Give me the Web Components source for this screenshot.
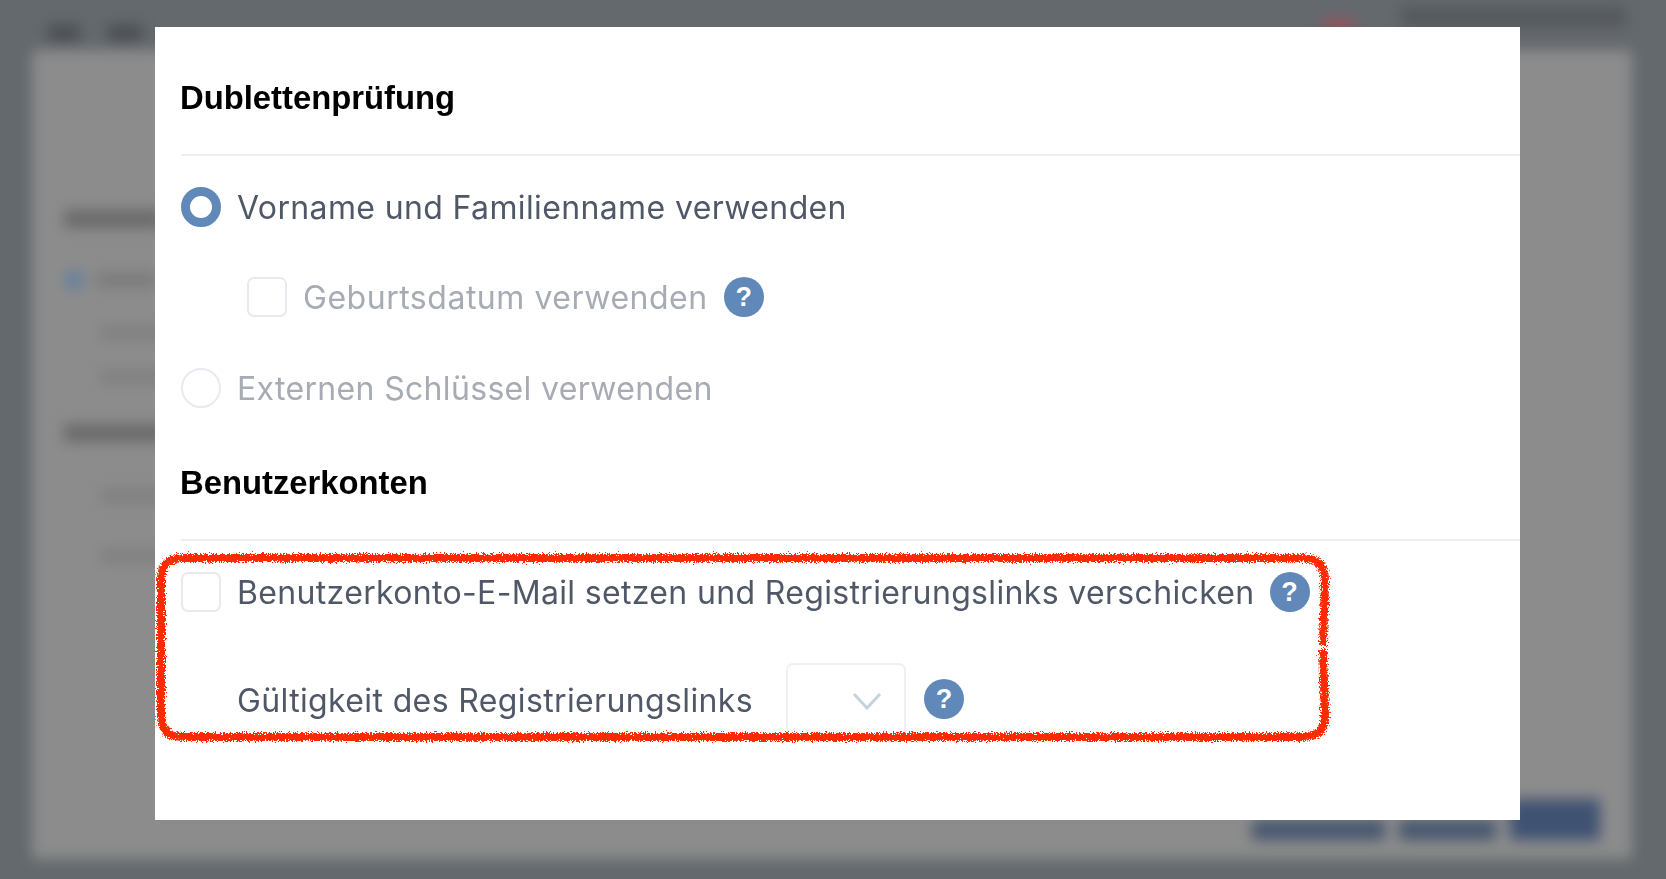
<!DOCTYPE html>
<html lang="de">
<head>
<meta charset="utf-8">
<title>Dublettenprüfung</title>
<style>
  html, body { margin: 0; padding: 0; height: 100%; overflow: hidden; background: #64696e; }
</style>
</head>
<body>
<page-shade></page-shade>
<dedupe-dialog>
  <section-title>Dublettenprüfung</section-title>
  <form-row kind="radio-on" style="margin-top:31px">Vorname und Familienname verwenden</form-row>
  <form-row kind="check" muted indent style="margin-top:50px;letter-spacing:.52px">Geburtsdatum verwenden<help-badge slot="after"></help-badge></form-row>
  <form-row kind="radio" muted style="margin-top:51px;letter-spacing:.33px">Externen Schlüssel verwenden</form-row>
  <section-title style="margin-top:55px">Benutzerkonten</section-title>
  <form-row kind="check" style="margin-top:31px;letter-spacing:.34px">Benutzerkonto-E-Mail setzen und Registrierungslinks verschicken<help-badge slot="after" style="margin-left:15px"></help-badge></form-row>
  <select-row style="margin-top:51px">Gültigkeit des Registrierungslinks</select-row>
  <red-scribble></red-scribble>
</dedupe-dialog>

<script>
class PageShade extends HTMLElement {
  constructor() {
    super();
    this.shadowDOM = this.attachShadow({ mode: 'open' });
    this.shadowDOM.innerHTML = `
      <style>
        :host { display: block; width: 1666px; height: 879px; overflow: hidden; background: #64696e; }
        .blur { height: 100%; filter: blur(7px); display: flex; flex-direction: column; }
        .top { height: 50px; flex: none; display: flex; align-items: center; gap: 28px; padding: 0 40px 0 48px; }
        .top i { display: block; height: 16px; background: #4a4e52; }
        .top .a { width: 32px; margin-top: 16px; }
        .top .b { width: 34px; margin-top: 16px; }
        .top .red { width: 30px; height: 14px; background: #96525a; margin: 2px 5px 0 auto; }
        .top .c { width: 225px; height: 20px; margin: 0 0 16px 14px; background: #55595d; }
        .panel { flex: 1; margin: 0 34px 20px 32px; background: #8c8c8c; padding: 160px 0 19px 32px; display: flex; flex-direction: column; }
        .panel i { display: block; background: #7a7a7a; height: 14px; flex: none; }
        .h { width: 100px; background: #6a6a6a !important; height: 18px !important; }
        .dot { width: 20px !important; height: 20px !important; border-radius: 50%; background: #66809f !important; }
        .line { display: flex; align-items: center; gap: 12px; margin-top: 42px; }
        .sub { margin: 36px 0 0 36px; width: 90px; background: #808080 !important; }
        .foot { margin-top: auto; display: flex; justify-content: flex-end; gap: 14px; padding-right: 32px; align-items: flex-end; }
        .foot i { background: #47566e; height: 20px; }
        .foot .x { width: 133px; }
        .foot .y { width: 97px; }
        .foot .z { width: 90px; height: 41px; background: #3f5272; }
      </style>
      <div class="blur">
        <div class="top"><i class="a"></i><i class="b"></i><i class="red"></i><i class="c"></i></div>
        <div class="panel">
          <i class="h"></i>
          <div class="line"><i class="dot"></i><i style="width:60px"></i></div>
          <i class="sub"></i>
          <i class="sub" style="margin-top:30px"></i>
          <i class="h" style="margin-top:40px"></i>
          <i class="sub" style="margin-top:47px"></i>
          <i class="sub" style="margin-top:46px"></i>
          <div class="foot"><i class="x"></i><i class="y"></i><i class="z"></i></div>
        </div>
      </div>
    `;
  }
}

class DedupeDialog extends HTMLElement {
  constructor() {
    super();
    this.shadowDOM = this.attachShadow({ mode: 'open' });
    this.shadowDOM.innerHTML = `
      <style>
        :host {
          display: block;
          position: absolute;
          left: 155px;
          top: 27px;
          width: 1365px;
          height: 793px;
          box-sizing: border-box;
          padding: 51px 0 0 26px;
          background: #fff;
        }
      </style>
      <slot></slot>
    `;
  }
}

class SectionTitle extends HTMLElement {
  constructor() {
    super();
    this.shadowDOM = this.attachShadow({ mode: 'open' });
    this.shadowDOM.innerHTML = `
      <style>
        :host {
          display: block;
          font: 700 32.8px/40px "Liberation Sans", Arial, sans-serif;
          color: #000;
          padding-bottom: 36px;
          border-bottom: 2px solid #eceef0;
        }
        span { display: block; filter: blur(.7px); margin-left: -1px; }
      </style>
      <span><slot></slot></span>
    `;
  }
}

class FormRow extends HTMLElement {
  constructor() {
    super();
    this.shadowDOM = this.attachShadow({ mode: 'open' });
    const kind = this.getAttribute('kind');
    this.shadowDOM.innerHTML = `
      <style>
        :host {
          display: flex;
          align-items: center;
          height: 40px;
          font: 400 32px/40px Inter, "Liberation Sans", sans-serif;
          letter-spacing: .37px;
          color: #505868;
        }
        :host([muted]) { color: #a6abb4; }
        :host([indent]) { margin-left: 66px; }
        .box { width: 40px; height: 40px; box-sizing: border-box; flex: none; margin-right: 16px; border: 2px solid #e8eaee; background: #fff; }
        .check { border-radius: 7px; }
        .radio, .radio-on { border-radius: 50%; }
        .radio-on { border: 9.5px solid #6088b8; }
        .label { white-space: nowrap; filter: blur(.7px); padding-top: 2px; }
        ::slotted([slot=after]) { margin-left: 16px; }
      </style>
      <span class="box ${kind}"></span>
      <span class="label"><slot></slot></span>
      <slot name="after"></slot>
    `;
  }
}

class SelectRow extends HTMLElement {
  constructor() {
    super();
    this.shadowDOM = this.attachShadow({ mode: 'open' });
    this.shadowDOM.innerHTML = `
      <style>
        :host {
          display: flex;
          align-items: center;
          height: 75px;
          margin-left: 56px;
          font: 400 32px/40px Inter, "Liberation Sans", sans-serif;
          letter-spacing: .37px;
          color: #505868;
        }
        .label { white-space: nowrap; width: 549px; flex: none; filter: blur(.7px); }
        .select {
          width: 120px;
          height: 75px;
          box-sizing: border-box;
          flex: none;
          border: 2px solid #eff0f3;
          border-radius: 7px;
          display: flex;
          align-items: center;
          justify-content: flex-end;
          padding: 0 21px 0 0;
        }
        svg { display: block; }
        help-badge { margin: 0 0 4px 18px; }
      </style>
      <span class="label"><slot></slot></span>
      <span class="select">
        <svg width="32" height="18" viewBox="0 0 32 18"><path d="M3 2 L16 16 L29 2" fill="none" stroke="#c8d2dc" stroke-width="3"/></svg>
      </span>
      <help-badge></help-badge>
    `;
  }
}

class HelpBadge extends HTMLElement {
  constructor() {
    super();
    this.shadowDOM = this.attachShadow({ mode: 'open' });
    this.shadowDOM.innerHTML = `
      <style>
        :host {
          display: flex;
          flex: none;
          width: 40px;
          height: 40px;
          border-radius: 50%;
          background: #6088b8;
          color: #fff;
          font: 700 27px/40px "Liberation Sans", Arial, sans-serif;
          letter-spacing: 0;
          align-items: center;
          justify-content: center;
        }
      </style>
      <span>?</span>
    `;
  }
}

class RedScribble extends HTMLElement {
  constructor() {
    super();
    this.shadowDOM = this.attachShadow({ mode: 'open' });
    this.shadowDOM.innerHTML = `
      <style>
        :host { display: block; position: absolute; left: 0; top: 520px; width: 1190px; height: 210px; pointer-events: none; }
        svg { display: block; }
      </style>
      <svg width="1190" height="210" viewBox="0 0 1190 210">
        <defs>
          <filter id="rough" x="-2%" y="-10%" width="104%" height="120%">
            <feTurbulence type="fractalNoise" baseFrequency="0.7" numOctaves="3" seed="4"/>
            <feDisplacementMap in="SourceGraphic" scale="8" xChannelSelector="R" yChannelSelector="G"/>
          </filter>
        </defs>
        <path filter="url(#rough)" fill="none" stroke="#ff2a00" stroke-width="8"
          d="M1168 98 L1170 34 Q1170 11 1147 11 L28 11 Q6 11 6 33 L6 168 Q6 190 28 190 L1147 190 Q1170 190 1170 168 L1168 102"/>
      </svg>
    `;
  }
}

customElements.define('page-shade', PageShade);
customElements.define('dedupe-dialog', DedupeDialog);
customElements.define('section-title', SectionTitle);
customElements.define('form-row', FormRow);
customElements.define('select-row', SelectRow);
customElements.define('help-badge', HelpBadge);
customElements.define('red-scribble', RedScribble);
</script>
</body>
</html>
